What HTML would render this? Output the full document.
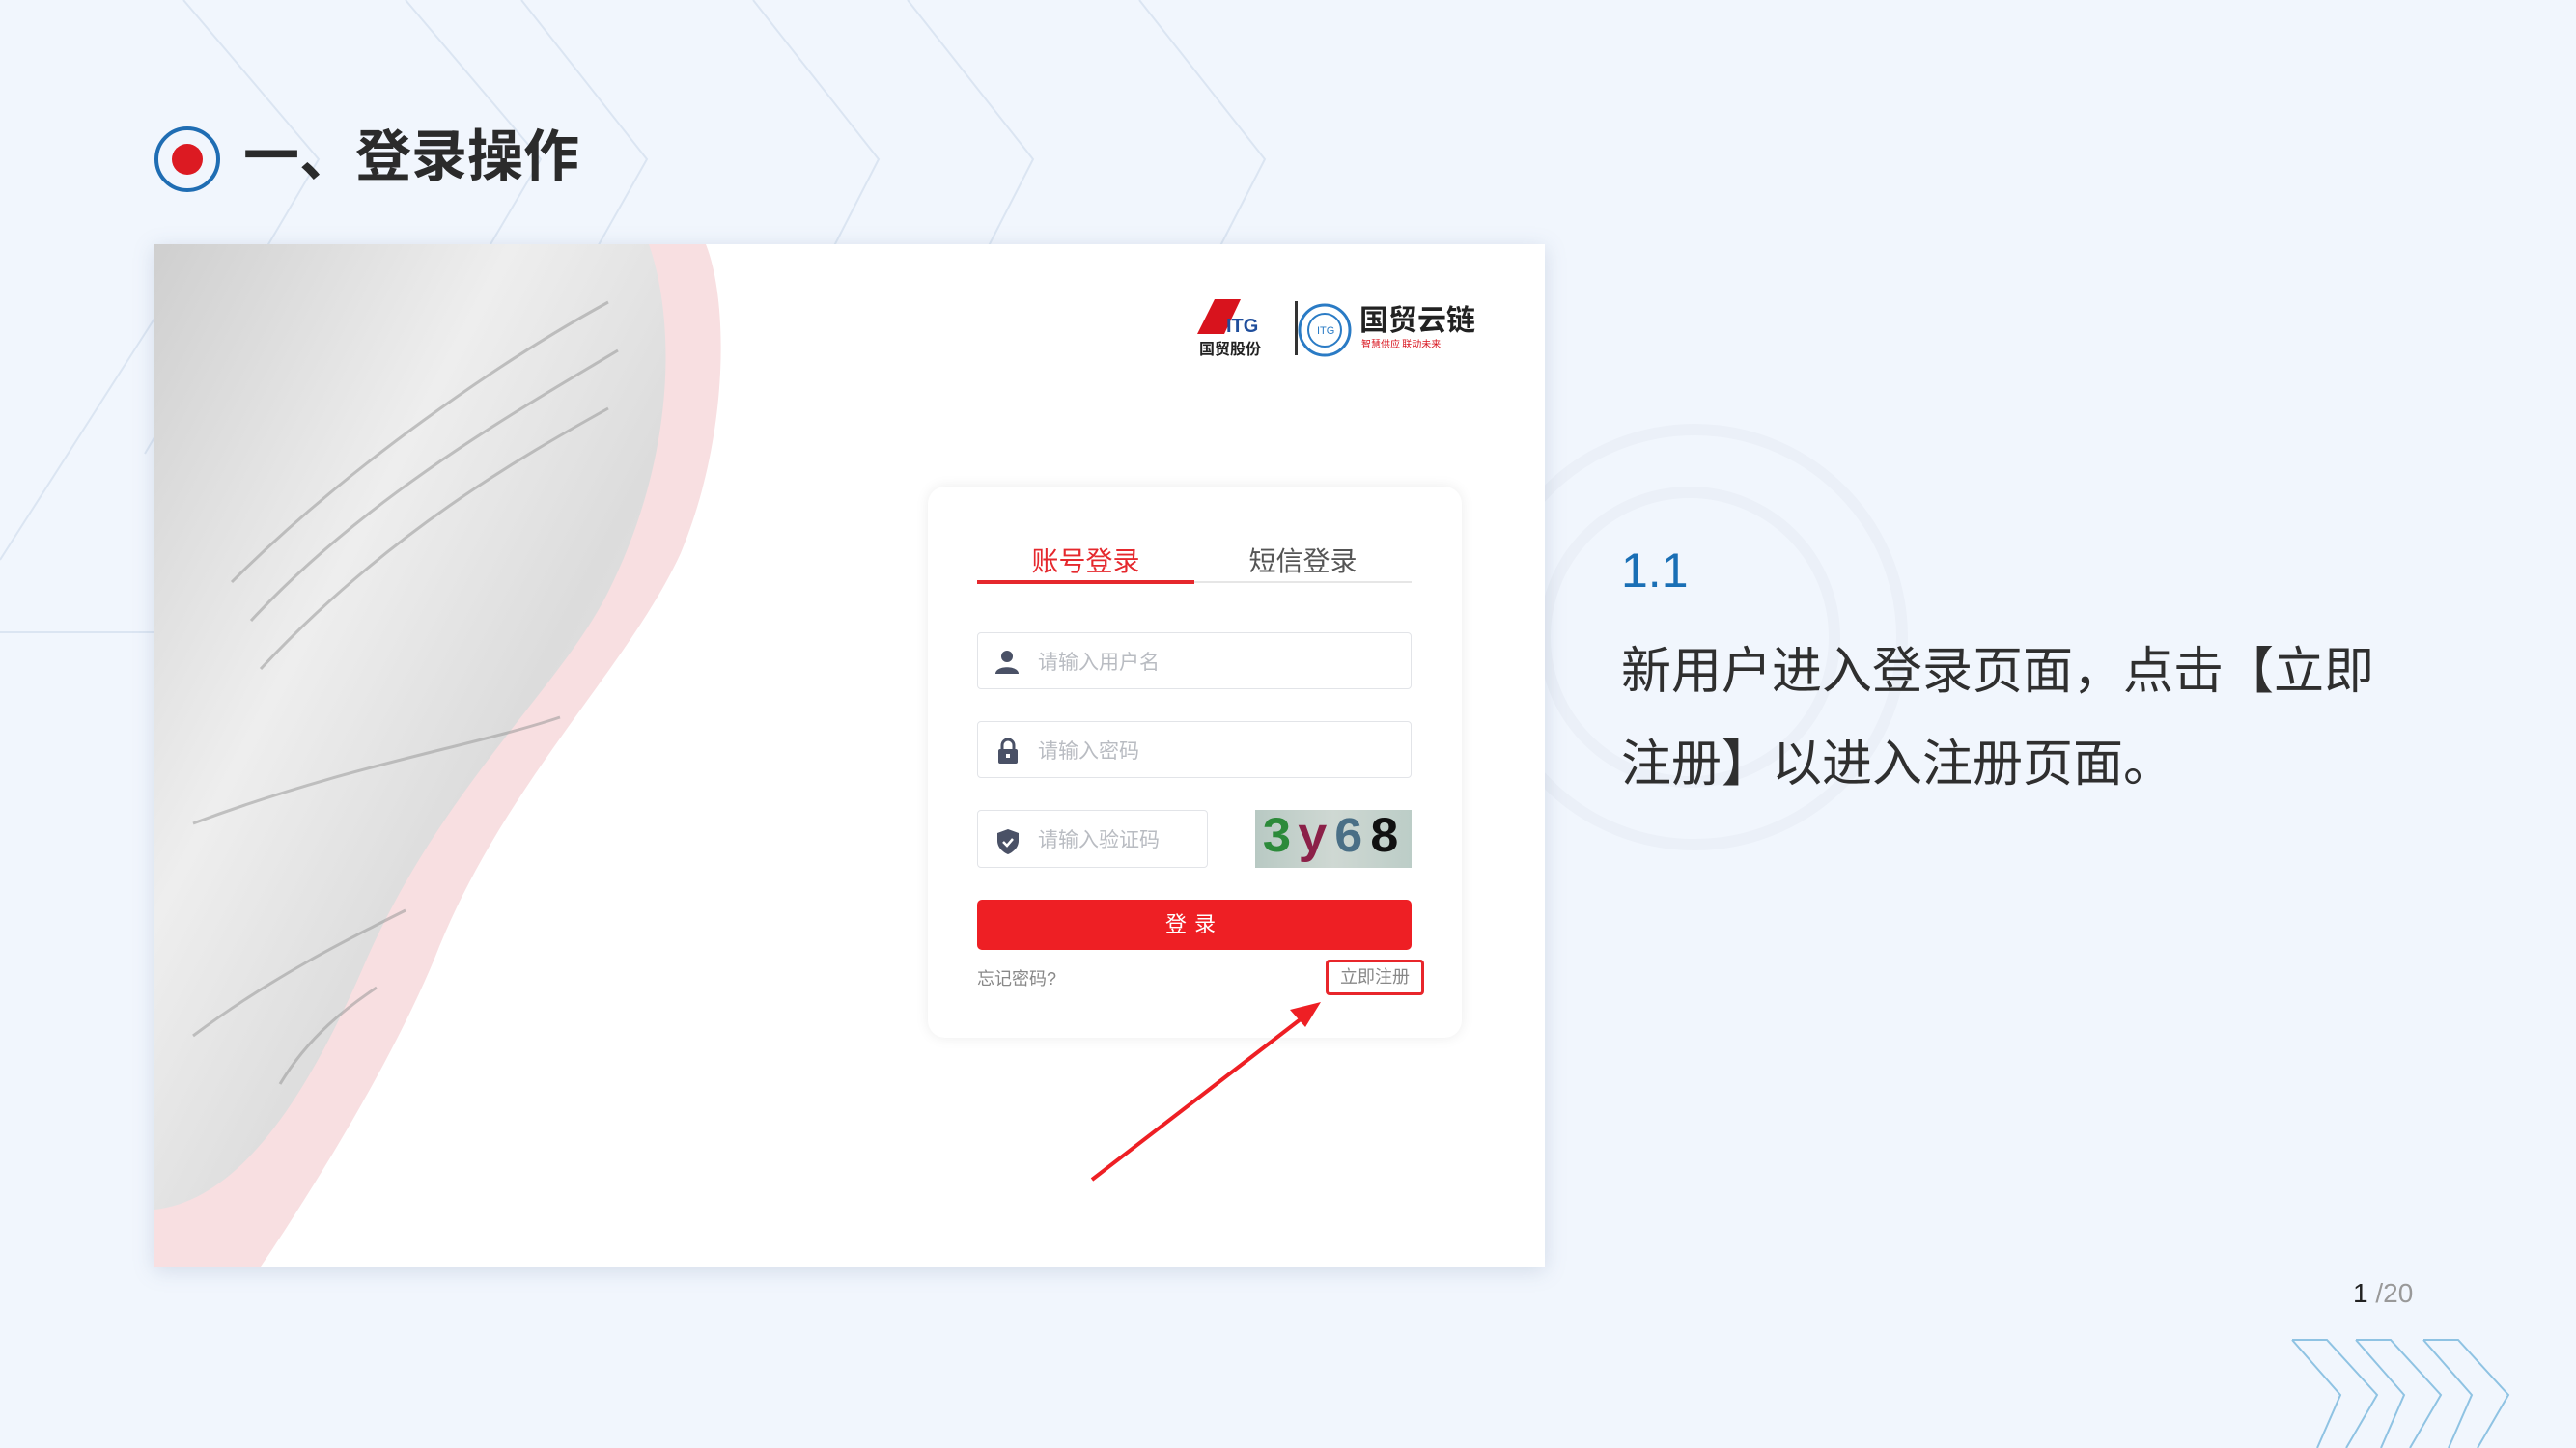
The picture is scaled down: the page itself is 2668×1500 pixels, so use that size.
<!DOCTYPE html>
<html><head><meta charset="utf-8"><style>
*{margin:0;padding:0;box-sizing:border-box}
body{width:2668px;height:1500px;background:#f1f6fd;position:relative;overflow:hidden;font-family:"Liberation Sans","Noto Sans CJK SC",sans-serif}
.abs{position:absolute}
.panel{left:160px;top:253px;width:1440px;height:1059px;background:#fff;box-shadow:0 4px 20px rgba(120,140,170,.25);overflow:hidden}
.card{left:961px;top:504px;width:553px;height:571px;background:#fff;border-radius:18px;box-shadow:0 0 14px rgba(0,0,0,.08)}
.inp{border:1.5px solid #e2e4e8;border-radius:4px;background:#fff}
.ph{position:absolute;left:62px;top:50%;transform:translateY(-50%);font-size:21px;color:#b9bcc2}
</style></head><body>
<svg class="abs" style="left:0;top:0" width="2668" height="1500">
<g fill="none" stroke="#dbe5f2" stroke-width="2">
<path d="M190 0 L330 165 L150 470"/><path d="M420 0 L560 165 L380 470"/><path d="M540 0 L670 165 L560 360"/>
<path d="M780 0 L910 165 L810 360"/><path d="M940 0 L1070 165 L970 360"/><path d="M1180 0 L1310 165 L1210 360"/>
<path d="M160 330 L0 580"/><path d="M0 655 L160 655"/>
</g>
<g fill="none" stroke="#e9eef6" stroke-width="12" opacity=".7"><circle cx="1755" cy="660" r="215"/><circle cx="1750" cy="660" r="150"/></g>
<g fill="none" stroke="#8fc3e3" stroke-width="2">
<path d="M2374 1388 L2410 1388 L2462 1445 L2430 1500"/><path d="M2440 1388 L2476 1388 L2528 1445 L2496 1500"/><path d="M2510 1388 L2546 1388 L2598 1445 L2566 1500"/>
<path d="M2374 1388 L2424 1445 L2400 1500"/><path d="M2440 1388 L2490 1445 L2466 1500"/><path d="M2510 1388 L2560 1445 L2536 1500"/>
</g>
</svg>
<div class="abs" style="left:160px;top:131px;width:68px;height:68px;border:4px solid #1f6db3;border-radius:50%"></div>
<div class="abs" style="left:178px;top:149px;width:32px;height:32px;background:#dc1a22;border-radius:50%"></div>
<div class="abs" style="left:252px;top:128px;font-size:58px;font-weight:bold;color:#2b2b2b;line-height:70px">一、登录操作</div>

<div class="abs panel">
<svg class="abs" style="left:0;top:0" width="1440" height="1059">
<defs><linearGradient id="g" x1="0" y1="0" x2="1" y2="1"><stop offset="0" stop-color="#cfcfcf"/><stop offset=".35" stop-color="#eeeeee"/><stop offset=".6" stop-color="#dcdcdc"/><stop offset="1" stop-color="#f0f0f0"/></linearGradient></defs>
<path d="M0 0 L571 0 C595 60 595 200 545 320 C490 440 360 560 290 740 C240 860 150 1000 110 1059 L0 1059Z" fill="#f8dfe1"/>
<path d="M0 0 L512 0 C540 80 540 220 470 360 C420 460 300 560 220 740 C160 880 90 990 0 1000Z" fill="url(#g)"/>
<g fill="none" stroke="#9a9a9a" stroke-width="3" opacity=".55">
<path d="M80 350 C200 230 360 120 470 60"/><path d="M100 390 C220 260 380 170 480 110"/><path d="M110 440 C240 300 380 220 470 170"/><path d="M40 600 C200 540 330 520 420 490"/><path d="M40 820 C120 760 200 720 260 690"/><path d="M130 870 C160 820 200 790 230 770"/></g>
</svg>
<div class="abs" style="left:1080px;top:55px;width:318px;height:62px">
<svg width="318" height="62"><path d="M18 2 L45 2 L28 38 L0 38Z" fill="#d8131d"/>
<text x="30" y="36" font-family="Liberation Sans" font-weight="bold" font-size="20" fill="#1f4e9c">ITG</text>
<text x="2" y="59" font-family="Noto Sans CJK SC" font-weight="bold" font-size="16" fill="#222">国贸股份</text>
<rect x="101" y="4" width="3" height="56" fill="#333"/>
<circle cx="132" cy="34" r="26" fill="none" stroke="#2a7bc5" stroke-width="3"/><circle cx="132" cy="34" r="17" fill="none" stroke="#2a7bc5" stroke-width="2"/>
<text x="124" y="38" font-size="11" fill="#2a7bc5" font-family="Liberation Sans">ITG</text>
<text x="168" y="34" font-family="Noto Sans CJK SC" font-weight="bold" font-size="30" fill="#222">国贸云链</text>
<text x="170" y="52" font-family="Noto Sans CJK SC" font-size="10" fill="#d8131d">智慧供应  联动未来</text></svg></div>
</div>

<div class="abs card"></div>
<div class="abs" style="left:1012px;top:560px;width:225px;text-align:center;font-size:28px;color:#e5282d">账号登录</div>
<div class="abs" style="left:1237px;top:560px;width:225px;text-align:center;font-size:28px;color:#555">短信登录</div>
<div class="abs" style="left:1012px;top:602px;width:450px;height:2px;background:#e6e6e6"></div>
<div class="abs" style="left:1012px;top:601px;width:225px;height:4px;background:#e5282d"></div>

<div class="abs inp" style="left:1012px;top:655px;width:450px;height:59px"><svg class="abs" style="left:16px;top:16px" width="28" height="28"><circle cx="14" cy="8" r="6" fill="#4a5166"/><path d="M2 26 C2 17 26 17 26 26Z" fill="#4a5166"/></svg><span class="ph">请输入用户名</span></div>
<div class="abs inp" style="left:1012px;top:747px;width:450px;height:59px"><svg class="abs" style="left:18px;top:15px" width="26" height="30"><path d="M7 13 V9 a6 6 0 0 1 12 0 V13" fill="none" stroke="#4a5166" stroke-width="3"/><rect x="3" y="13" width="20" height="15" rx="2" fill="#4a5166"/><rect x="11" y="18" width="4" height="4" fill="#fff"/></svg><span class="ph">请输入密码</span></div>
<div class="abs inp" style="left:1012px;top:839px;width:239px;height:60px"><svg class="abs" style="left:18px;top:18px" width="26" height="28"><path d="M13 1 L24 5 V13 C24 20 18 25 13 27 C8 25 2 20 2 13 V5Z" fill="#4a5166"/><path d="M8 14 L12 18 L18 11" fill="none" stroke="#fff" stroke-width="2.5"/></svg><span class="ph">请输入验证码</span></div>
<div class="abs" style="left:1300px;top:839px;width:162px;height:60px;background:linear-gradient(90deg,#b8c9c3,#cfd8d3,#bccdc7);font-family:'Liberation Mono',monospace;font-size:52px;font-weight:bold;line-height:60px;letter-spacing:6px;text-align:center"><span style="color:#2c8a3a">3</span><span style="color:#8b2048">y</span><span style="color:#4a6f86">6</span><span style="color:#111">8</span></div>
<div class="abs" style="left:1012px;top:932px;width:450px;height:52px;background:#ee1f24;border-radius:5px;color:#fff;text-align:center;line-height:52px;font-size:22px;letter-spacing:8px">登录</div>
<div class="abs" style="left:1012px;top:1000px;font-size:18px;color:#888">忘记密码?</div>
<div class="abs" style="left:1373px;top:994px;width:102px;height:37px;border:3px solid #e8262b;border-radius:4px;font-size:18px;color:#888;text-align:center;line-height:31px">立即注册</div>
<svg class="abs" style="left:0;top:0" width="2668" height="1500"><line x1="1131" y1="1222" x2="1352" y2="1052" stroke="#ee1f24" stroke-width="4"/><path d="M1368 1038 L1336 1046 L1352 1064Z" fill="#ee1f24"/></svg>

<div class="abs" style="left:1679px;top:562px;font-size:50px;color:#1a6fb5">1.1</div>
<div class="abs" style="left:1679px;top:648px;width:980px;font-size:52px;line-height:96px;color:#2f2f2f;white-space:nowrap">新用户进入登录页面，点击【立即<br>注册】以进入注册页面。</div>
<div class="abs" style="left:2437px;top:1324px;font-size:28px;color:#222">1 <span style="color:#999">/20</span></div>
</body></html>
